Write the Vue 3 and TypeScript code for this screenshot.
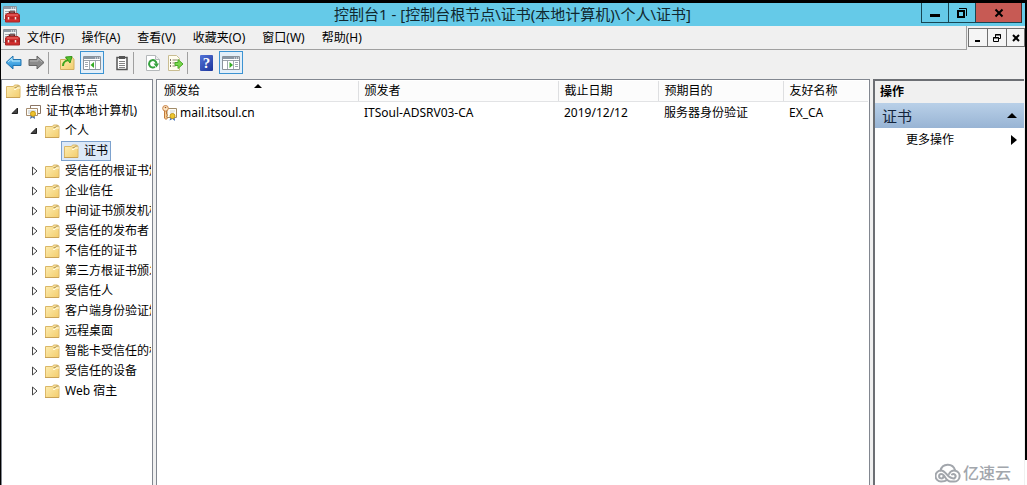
<script setup lang="ts">
import { ref } from 'vue'

interface TreeNode {
  label: string
  depth: number
  state: 'open' | 'closed' | 'none'
  icon: 'folder' | 'certs'
}

interface Certificate {
  issuedTo: string
  issuedBy: string
  expires: string
  purpose: string
  friendlyName: string
}

const title = '控制台1 - [控制台根节点\\证书(本地计算机)\\个人\\证书]'
const menus: string[] = ['文件(F)', '操作(A)', '查看(V)', '收藏夹(O)', '窗口(W)', '帮助(H)']
const columns: string[] = ['颁发给', '颁发者', '截止日期', '预期目的', '友好名称']

const stores: string[] = [
  '受信任的根证书颁发机构',
  '企业信任',
  '中间证书颁发机构',
  '受信任的发布者',
  '不信任的证书',
  '第三方根证书颁发机构',
  '受信任人',
  '客户端身份验证颁发者',
  '远程桌面',
  '智能卡受信任的根',
  '受信任的设备',
  'Web 宿主',
]

const nodes: TreeNode[] = [
  { label: '控制台根节点', depth: 0, state: 'none', icon: 'folder' },
  { label: '证书(本地计算机)', depth: 1, state: 'open', icon: 'certs' },
  { label: '个人', depth: 2, state: 'open', icon: 'folder' },
  { label: '证书', depth: 3, state: 'none', icon: 'folder' },
  ...stores.map((label): TreeNode => ({ label, depth: 2, state: 'closed', icon: 'folder' })),
]

const selected = ref(3)

const certificates: Certificate[] = [
  {
    issuedTo: 'mail.itsoul.cn',
    issuedBy: 'ITSoul-ADSRV03-CA',
    expires: '2019/12/12',
    purpose: '服务器身份验证',
    friendlyName: 'EX_CA',
  },
]
</script>

<template>
  <div class="window">
    <svg class="defs" width="0" height="0" aria-hidden="true">
      <defs>
        <linearGradient id="folderFill" x1="0" y1="0" x2="1" y2="1">
          <stop offset="0" stop-color="#fdeeb5" />
          <stop offset="1" stop-color="#f3cd6c" />
        </linearGradient>
        <linearGradient id="blueArrow" x1="0" y1="0" x2="0" y2="1">
          <stop offset="0" stop-color="#7fd0f7" />
          <stop offset="1" stop-color="#1b86d2" />
        </linearGradient>
        <symbol id="folder" viewBox="0 0 15 15">
          <path d="M.5 2.500h7l1-1.500h4l1.500 1.500v11H.500z" fill="url(#folderFill)" stroke="#dcb868" />
          <path d="M8 5.500h2l1-1.500h3" fill="none" stroke="#fffbe8" />
          <path d="M8.500 3.500h2l1-1.500h2" fill="none" stroke="#b39a63" />
          <path d="M0 13.500h14" stroke="#c9a256" />
        </symbol>
        <symbol id="toolbox" viewBox="0 0 17 17">
          <path d="M.5.500h13v13H.500z" fill="#f3f4f5" stroke="#8b9298" />
          <path d="M1 2h12" stroke="#8f9ba6" stroke-width="2" />
          <path d="M8 2h1M10 2h1M12 2h1" stroke="#fff" />
          <path d="M2 5.500h4M2 7.500h3M2 9.500h1M7 4.500h5" stroke="#a5adb3" />
          <path d="M6.500 8V6h5v2" fill="none" stroke="#5b2020" stroke-width="1.500" />
          <path d="m2.500 9 1.500-1.500h11L16.500 9v7h-14z" fill="#cf2d2d" stroke="#a82626" />
          <path d="M4 9h11" stroke="#ef7b75" />
          <path d="M3 12h13" stroke="#9c1c1c" />
          <path d="M5.500 11v2.500M12.500 11v2.500" stroke="#f4e6e2" stroke-width="1.500" />
        </symbol>
        <symbol id="certs" viewBox="0 0 15 15">
          <path d="M4.500 1.500h10v8h-10z" fill="#fff" stroke="#8b7564" />
          <path d="M.5 4.500h11v7H.500z" fill="#fffef8" stroke="#a68c70" />
          <path d="M2 7h8M2 9h3" stroke="#b9c3cc" />
          <path d="m5 10-1 5 2.500-1.500L9 15l-.5-5z" fill="#4c71a8" />
          <circle cx="7" cy="9.800" r="2.500" fill="#edc32e" stroke="#c79a1a" />
        </symbol>
        <symbol id="keycert" viewBox="0 0 16 16">
          <path d="M5 3.500h9.500v9H5z" fill="#fffdf5" stroke="#a18b68" />
          <path d="M8 6h5M8 8h4" stroke="#cdd2d4" />
          <path d="M2.500 5v8L4 14.500l1.500-1.500-1-1.500 1-1.500-1-1V5" fill="#f8cf93" stroke="#c07a3a" />
          <circle cx="3.500" cy="3.300" r="2.800" fill="#fbe6c4" stroke="#c98347" />
          <circle cx="3.500" cy="2.500" r=".8" fill="#a65620" />
          <path d="m9 11-1.500 4.500L10.500 14l2.500 2-.5-5z" fill="#426eb4" />
          <circle cx="10.500" cy="11" r="2.500" fill="#edc72d" stroke="#c79a1a" />
        </symbol>
        <symbol id="pane" viewBox="0 0 18 14">
          <path d="M.5.500h17v13H.500z" fill="#fff" stroke="#8a929b" />
          <path d="M1 2h16" stroke="#8996a4" stroke-width="2" />
          <path d="M12 2h1M14 2h1M16 2h1" stroke="#fff" />
          <path d="M1 4.500h16" stroke="#9ba3ab" />
        </symbol>
      </defs>
    </svg>

    <header class="titlebar">
      <svg class="app-icon"><use href="#toolbox" /></svg>
      <h1>{{ title }}</h1>
      <div class="controls">
        <button class="ctl" aria-label="最小化">
          <svg width="12" height="12"><path d="M1 8.500h10" stroke="#000" stroke-width="3" /></svg>
        </button>
        <button class="ctl" aria-label="还原">
          <svg width="12" height="12" fill="none" stroke="#000">
            <path d="M2 4h6v6H2z" stroke-width="2" /><path d="M3 1.500h7.500V9" />
          </svg>
        </button>
        <button class="ctl close" aria-label="关闭">
          <svg width="12" height="12"><path d="m2.500 2.500 7 7m0-7-7 7" stroke="#000" stroke-width="2" /></svg>
        </button>
      </div>
    </header>

    <nav class="menubar">
      <div class="menus">
        <svg class="app-icon"><use href="#toolbox" /></svg>
        <button v-for="menu in menus" :key="menu" class="menu">{{ menu }}</button>
      </div>
      <div class="child-controls">
        <button aria-label="最小化子窗口">
          <svg width="10" height="10"><path d="M2 8h5" stroke="#000" stroke-width="2" /></svg>
        </button>
        <button aria-label="还原子窗口">
          <svg width="10" height="10" fill="none" stroke="#000">
            <path d="M3.500 4V1.500h5v4H7M3 2h6M1.500 4.500h5v4h-5zM1 5h6" />
          </svg>
        </button>
        <button aria-label="关闭子窗口">
          <svg width="10" height="10"><path d="m2 2 6 6m0-6L2 8" stroke="#000" stroke-width="2" /></svg>
        </button>
      </div>
    </nav>

    <div class="toolbar" role="toolbar" aria-label="工具栏">
      <button class="tool" aria-label="后退">
        <svg width="17" height="15">
          <path d="M1 7.500 8 1v3.500h8v6H8V14z" fill="url(#blueArrow)" stroke="#2275b0" />
          <path d="M3 7 7 3.500V6h8" fill="none" stroke="#b9e8fc" />
        </svg>
      </button>
      <button class="tool" aria-label="前进">
        <svg width="17" height="15">
          <path d="M16 7.500 9 1v3.500H1v6h8V14z" fill="#8b8b8b" stroke="#666" />
          <path d="M2 6h8V3.500L14 7" fill="none" stroke="#b8b8b8" />
        </svg>
      </button>
      <i class="sep"></i>
      <button class="tool" aria-label="上一级">
        <svg width="15" height="16">
          <path d="M.5 4.500h5l1-2h6l1.500 2v10H.500z" fill="url(#folderFill)" stroke="#d3af60" />
          <path d="M3 11c0-4 2-5 5-6" fill="none" stroke="#3fa51f" stroke-width="2" />
          <path d="M5.500 2 12 1.500 10 8z" fill="#54c22f" stroke="#359517" />
        </svg>
      </button>
      <button class="tool on" aria-label="显示控制台树">
        <svg width="18" height="14">
          <use href="#pane" />
          <path d="M2 6.500h3M2 8.500h3M2 10.500h3M6.500 5v8.500M12.500 5v8" stroke="#a0a9b0" />
          <path d="M11 6v6L7.500 9z" fill="#36ad25" />
        </svg>
      </button>
      <button class="tool clipboard" aria-label="属性">
        <svg width="14" height="16">
          <path d="M2 2.500h10v12H2z" fill="#fff" stroke="#555" stroke-width="1.500" />
          <path d="M4 1h6v3H4z" fill="#555" />
          <path d="M4 6.500h6M4 8.500h6M4 10.500h6M4 12.500h6" stroke="#858585" />
        </svg>
      </button>
      <i class="sep"></i>
      <button class="tool" aria-label="刷新">
        <svg width="14" height="16">
          <path d="M.5.500h9l4 4v11H.500z" fill="#fff" stroke="#b4b8ba" />
          <path d="M9.500.500v4h4" fill="#eee" stroke="#b4b8ba" />
          <path d="M9 11.800a3.700 3.700 0 1 1 1.500-3" fill="none" stroke="#35a23e" stroke-width="2" />
          <path d="M7.500 8.500H13l-2.500 4z" fill="#35a23e" />
        </svg>
      </button>
      <button class="tool" aria-label="导出列表">
        <svg width="17" height="16">
          <path d="M1.500.500h8l3 3v12h-11z" fill="#fffdf0" stroke="#c9bd92" />
          <path d="M3 5h1M3 8h1M3 11h1" stroke="#554a37" stroke-width="1.500" />
          <path d="M5.500 5h5M5.500 8h3M5.500 11h3" stroke="#8c836e" />
          <path d="M8 7.500h3V4.500l5 4.500-5 4.500v-3H8z" fill="#78d64c" stroke="#48a928" />
        </svg>
      </button>
      <i class="sep"></i>
      <button class="tool" aria-label="帮助">
        <span class="help">?</span>
      </button>
      <button class="tool on" aria-label="显示操作窗格">
        <svg width="18" height="14">
          <use href="#pane" />
          <path d="M5.500 5v8M11.500 5v8M13 6.500h3M13 8.500h3M13 10.500h3" stroke="#a0a9b0" />
          <path d="M7.500 6v6L11 9z" fill="#36ad25" />
        </svg>
      </button>
    </div>

    <main class="panes">
      <aside class="pane tree" role="tree">
        <div
          v-for="(node, index) in nodes"
          :key="index"
          class="node"
          :class="['d' + node.depth, { selected: index === selected }]"
          role="treeitem"
          @click="selected = index"
        >
          <span v-if="node.state !== 'none'" class="twist">
            <svg v-if="node.state === 'open'" width="8" height="8">
              <path d="M6.500 1v5.500H1z" fill="#444" stroke="#222" />
            </svg>
            <svg v-else width="8" height="10">
              <path d="M2.500 1v8L7 5z" fill="#fff" stroke="#444" />
            </svg>
          </span>
          <span class="entry">
            <svg class="icon"><use :href="'#' + node.icon" /></svg>
            <span>{{ node.label }}</span>
          </span>
        </div>
      </aside>

      <section class="pane list">
        <table>
          <colgroup>
            <col class="w-name" /><col class="w-issuer" /><col class="w-date" /><col class="w-use" /><col />
          </colgroup>
          <thead>
            <tr>
              <th v-for="(column, index) in columns" :key="column" scope="col">
                {{ column }}
                <svg v-if="index === 0" class="sort" width="8" height="4"><path d="m0 4 4-4 4 4z" /></svg>
              </th>
            </tr>
          </thead>
          <tbody>
            <tr v-for="cert in certificates" :key="cert.issuedTo">
              <td>
                <span class="cert"><svg class="cert-icon"><use href="#keycert" /></svg>{{ cert.issuedTo }}</span>
              </td>
              <td>{{ cert.issuedBy }}</td>
              <td>{{ cert.expires }}</td>
              <td>{{ cert.purpose }}</td>
              <td>{{ cert.friendlyName }}</td>
            </tr>
          </tbody>
        </table>
      </section>

      <aside class="pane actions">
        <h2>操作</h2>
        <button class="group">
          证书
          <svg width="10" height="5"><path d="m0 5 5-5 5 5z" /></svg>
        </button>
        <button class="more">
          更多操作
          <svg width="6" height="10"><path d="m0 0 6 5-6 5z" /></svg>
        </button>
      </aside>
    </main>

    <div class="edge"></div>
    <div class="brand">
      <svg width="26" height="20" fill="none" stroke="#a2a6ac" stroke-width="2" stroke-linecap="round">
        <path d="M5.500 7.500a7.500 7.500 0 0 1 14.500-.5" />
        <path d="M8.500 13.500A2.200 2.200 0 1 1 6.500 11c3.500 0 4 7.500 9 7.500H19a5.500 5.500 0 1 0-5-7.500" />
        <path d="M12 17c-1.500 1.300-3.500 1.500-6 1.500A5.400 5.400 0 0 1 6 7.500c5 0 6.500 7.500 11 7.500a2.200 2.200 0 1 0 0-3.500" />
      </svg>
      <span>亿速云</span>
    </div>
  </div>
</template>

<style>
body {
  margin: 0;
}
</style>

<style scoped>
.window {
  box-sizing: border-box;
  position: relative;
  display: flex;
  flex-direction: column;
  height: 100vh;
  overflow: hidden;
  border-top: 3px solid #000;
  border-left: 1px solid #000;
  padding-right: 2px;
  background: #fff;
  color: #000;
  font: 12px/20px 'Noto Sans', 'Noto Sans CJK SC', sans-serif;
}
.defs {
  position: absolute;
}
svg {
  display: block;
  flex: none;
}
button {
  margin: 0;
  border: 0;
  padding: 0;
  background: none;
  color: inherit;
  font: inherit;
}
h1,
h2 {
  margin: 0;
  font-weight: 400;
}
.app-icon {
  width: 17px;
  height: 17px;
}
.titlebar {
  display: grid;
  grid-template-columns: 1fr auto 1fr;
  align-items: center;
  height: 23px;
  padding: 0 3px 0 2px;
  background: #65cae8;
}
.titlebar h1 {
  color: #10272e;
  font-size: 15px;
  line-height: 23px;
}
.controls {
  display: flex;
  align-self: start;
  justify-self: end;
}
.ctl {
  box-sizing: border-box;
  display: grid;
  place-items: center;
  width: 27px;
  height: 20px;
  border: 1px solid #174653;
  border-top: 0;
  border-right: 0;
}
.ctl.close {
  width: 47px;
  border-right: 1px solid #4b2723;
  background: #c75a54;
}
.menubar {
  display: flex;
  height: 24px;
  background: #f0f0f0;
}
.menus {
  display: flex;
  flex: 1;
  align-items: center;
  gap: 17px;
  padding-left: 2px;
  border-right: 1px solid #a0a0a0;
  border-bottom: 1px solid #a0a0a0;
}
.menus .app-icon {
  margin-right: -10px;
}
.child-controls {
  display: flex;
  align-items: flex-start;
  padding: 2px 0 0 1px;
}
.child-controls button {
  box-sizing: border-box;
  display: grid;
  place-items: center;
  width: 19px;
  height: 19px;
  border: 1px solid #707070;
  border-right-width: 0;
  background: #f5f5f5;
}
.child-controls button:last-child {
  border-right-width: 1px;
}
.toolbar {
  display: flex;
  align-items: center;
  height: 25px;
  padding: 0 0 4px 1px;
  background: #f0f0f0;
}
.tool {
  box-sizing: border-box;
  display: grid;
  place-items: center;
  width: 23px;
  height: 23px;
}
.tool.on {
  width: 24px;
  margin: 0 1px;
  border: 1px solid #3c93d2;
  background: #e3eff9;
}
.tool.clipboard {
  margin-left: 5px;
}
.help {
  width: 13px;
  height: 16px;
  border-radius: 1px;
  background: linear-gradient(135deg, #5474d8, #1c349a);
  color: #fff;
  font: bold 15px/16px 'Liberation Serif', serif;
}
.sep {
  width: 1px;
  height: 22px;
  margin-right: 7px;
  background: #a0a0a0;
}
.panes {
  display: flex;
  flex: 1;
  gap: 3px;
  min-height: 0;
  background: #f0f0f0;
}
.pane {
  box-sizing: border-box;
  overflow: hidden;
  border: 1px solid #828790;
  border-bottom: 0;
  background: #fff;
}
.tree {
  width: 152px;
  padding-top: 1px;
  padding-right: 1px;
}
.node {
  display: flex;
  align-items: center;
  height: 20px;
  overflow: hidden;
  white-space: nowrap;
}
.node.d0 {
  padding-left: 3px;
}
.node.d1 {
  padding-left: 8px;
}
.node.d2 {
  padding-left: 27px;
}
.node.d3 {
  padding-left: 59px;
}
.twist {
  display: grid;
  flex: none;
  place-items: center;
  width: 10px;
  margin-right: 4px;
}
.entry {
  box-sizing: border-box;
  display: flex;
  align-items: center;
  gap: 5px;
  height: 20px;
  padding: 0 2px;
}
.d0 .entry {
  padding-left: 1px;
}
.selected .entry {
  border: 1px solid #7da2ce;
  background: #dce9f8;
}
.icon {
  width: 15px;
  height: 15px;
}
.cert-icon {
  width: 16px;
  height: 16px;
}
.list {
  flex: 1;
  padding: 1px;
}
table {
  width: 100%;
  border-collapse: collapse;
  table-layout: fixed;
}
.w-name {
  width: 200px;
}
.w-issuer {
  width: 200px;
}
.w-date {
  width: 100px;
}
.w-use {
  width: 125px;
}
th,
td {
  padding: 0 0 0 6px;
  text-align: left;
  font-weight: 400;
  white-space: nowrap;
}
th {
  position: relative;
  height: 20px;
  border-right: 1px solid #dedfe1;
  border-bottom: 1px solid #e2e3e5;
  background: #fcfcfc;
}
th:last-child {
  border-right: 0;
}
td {
  height: 22px;
}
.cert {
  display: flex;
  align-items: center;
  gap: 2px;
  margin-left: -2px;
}
.sort {
  position: absolute;
  top: 3px;
  left: 96px;
}
.actions {
  width: 151px;
  margin-right: 1px;
  border-width: 2px 0 0 2px;
  border-color: #6c6f74;
}
.actions h2 {
  height: 22px;
  padding-left: 5px;
  background: #f0f0f0;
  font-size: 12px;
  font-weight: 700;
  line-height: 22px;
}
.group,
.more {
  box-sizing: border-box;
  display: flex;
  align-items: center;
  justify-content: space-between;
  width: 100%;
  height: 25px;
  padding: 0 7px;
}
.group {
  background: linear-gradient(#b9d0e8, #98b4d4);
  color: #14253c;
  font-size: 15px;
}
.group svg {
  fill: #000;
}
.more {
  height: 24px;
  padding-left: 31px;
}
.edge {
  position: absolute;
  top: 0;
  right: 0;
  bottom: 25px;
  width: 2px;
  background: #000;
}
.brand {
  position: absolute;
  right: 16px;
  bottom: 1px;
  display: flex;
  align-items: center;
  gap: 2px;
  color: #a2a6ac;
  font-size: 16px;
  font-weight: 500;
  line-height: 22px;
}
</style>
